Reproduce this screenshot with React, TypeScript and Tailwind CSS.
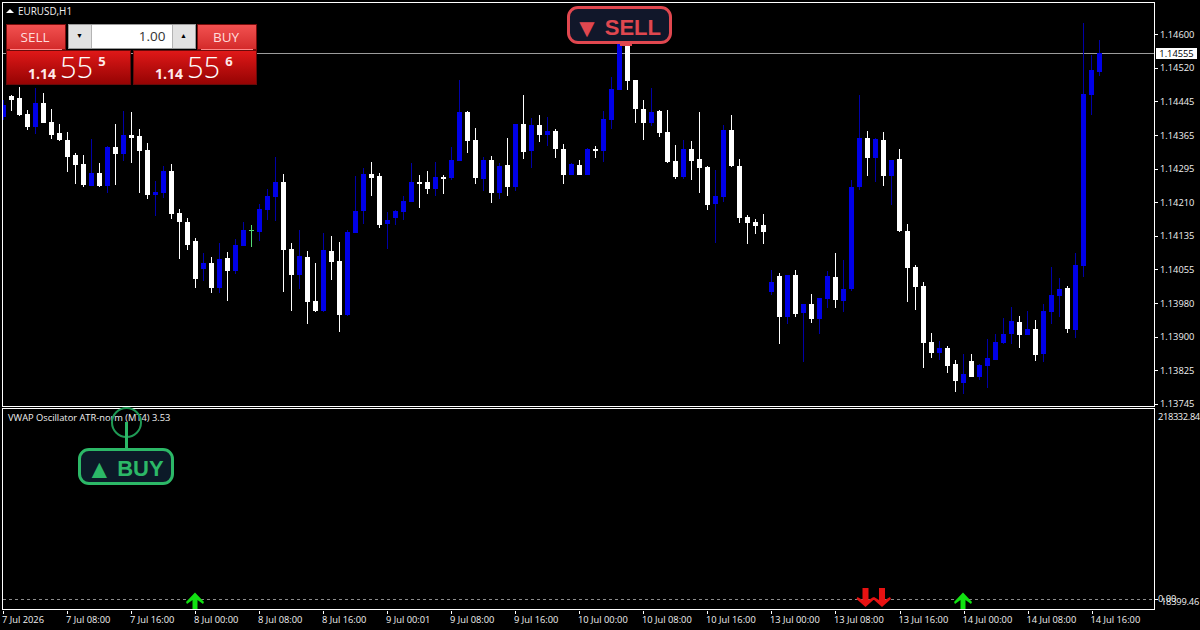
import type { ReactNode } from 'react';

type Candle = [number, number, number, number, 'w' | 'b' | 'g'];

// wick top, body top, body bottom, wick bottom, colour. One candle every 8px starting at x=3.
const CANDLES: Candle[] = [
  [100, 105, 117, 120, 'b'], [95, 96, 100, 111, 'w'], [87, 98, 115, 116, 'w'], [110, 114, 127, 130, 'w'],
  [88, 103, 127, 134, 'b'], [93, 103, 123, 123, 'w'], [109, 122, 135, 139, 'w'], [124, 133, 140, 141, 'w'],
  [132, 140, 157, 172, 'w'], [153, 155, 165, 184, 'w'], [155, 164, 185, 187, 'w'], [139, 173, 186, 186, 'b'],
  [163, 173, 186, 187, 'w'], [146, 147, 186, 193, 'b'], [124, 147, 154, 185, 'w'], [111, 135, 154, 161, 'b'],
  [112, 135, 138, 163, 'w'], [129, 136, 151, 193, 'w'], [143, 150, 195, 199, 'w'], [181, 192, 195, 216, 'b'],
  [166, 171, 193, 198, 'b'], [164, 171, 214, 219, 'w'], [209, 213, 222, 259, 'w'], [218, 222, 245, 250, 'w'],
  [238, 241, 279, 288, 'w'], [253, 263, 269, 281, 'b'], [257, 263, 288, 293, 'w'], [243, 259, 288, 293, 'b'],
  [252, 258, 271, 301, 'w'], [239, 245, 271, 274, 'b'], [222, 230, 246, 246, 'b'], [225, 230, 231, 247, 'g'],
  [204, 209, 232, 241, 'b'], [189, 196, 210, 220, 'b'], [157, 182, 197, 221, 'b'], [174, 182, 250, 292, 'w'],
  [243, 249, 275, 311, 'w'], [230, 256, 275, 289, 'b'], [251, 257, 302, 324, 'w'], [263, 301, 311, 312, 'w'],
  [233, 250, 311, 312, 'b'], [236, 251, 262, 280, 'w'], [242, 261, 315, 332, 'w'], [230, 232, 315, 316, 'b'],
  [176, 211, 233, 233, 'b'], [168, 174, 211, 224, 'b'], [162, 174, 178, 196, 'w'], [173, 176, 225, 228, 'w'],
  [212, 220, 224, 249, 'b'], [210, 211, 218, 225, 'b'], [196, 201, 212, 220, 'b'], [163, 182, 202, 202, 'b'],
  [175, 182, 184, 208, 'w'], [171, 182, 189, 194, 'w'], [162, 177, 189, 196, 'b'], [175, 177, 179, 194, 'w'],
  [147, 160, 178, 180, 'b'], [80, 112, 161, 161, 'b'], [111, 112, 141, 153, 'w'], [128, 140, 178, 184, 'w'],
  [157, 160, 179, 191, 'b'], [156, 160, 193, 203, 'w'], [163, 166, 193, 199, 'b'], [138, 165, 187, 196, 'w'],
  [124, 124, 187, 191, 'b'], [95, 124, 152, 159, 'w'], [118, 125, 151, 168, 'b'], [115, 125, 135, 142, 'w'],
  [117, 131, 135, 146, 'b'], [129, 131, 149, 158, 'w'], [144, 149, 175, 184, 'w'], [163, 164, 175, 175, 'b'],
  [160, 165, 175, 175, 'w'], [148, 149, 175, 175, 'b'], [146, 149, 151, 158, 'w'], [111, 119, 151, 162, 'b'],
  [77, 89, 120, 129, 'b'], [43, 43, 90, 90, 'b'], [36, 43, 81, 90, 'w'], [80, 80, 109, 123, 'w'],
  [100, 109, 123, 140, 'w'], [88, 112, 123, 126, 'b'], [110, 111, 133, 137, 'w'], [110, 132, 162, 163, 'w'],
  [145, 161, 177, 179, 'w'], [140, 149, 177, 179, 'b'], [141, 149, 161, 180, 'w'], [112, 159, 168, 193, 'w'],
  [166, 167, 205, 210, 'w'], [170, 196, 204, 243, 'b'], [125, 130, 197, 202, 'b'], [115, 130, 166, 167, 'w'],
  [159, 166, 218, 223, 'w'], [215, 217, 223, 244, 'w'], [219, 222, 226, 234, 'w'], [214, 225, 232, 244, 'w'],
  [270, 282, 292, 295, 'b'], [273, 276, 317, 344, 'w'], [275, 275, 317, 324, 'b'], [270, 275, 314, 317, 'w'],
  [304, 304, 313, 362, 'b'], [294, 304, 319, 323, 'w'], [298, 298, 319, 334, 'b'], [271, 276, 299, 308, 'b'],
  [253, 277, 300, 308, 'w'], [260, 289, 301, 312, 'b'], [180, 187, 289, 291, 'b'], [95, 138, 187, 190, 'b'],
  [131, 138, 158, 176, 'w'], [138, 139, 158, 182, 'b'], [132, 140, 176, 186, 'w'], [160, 160, 176, 205, 'b'],
  [149, 159, 231, 232, 'w'], [224, 231, 268, 302, 'w'], [265, 267, 287, 310, 'w'], [282, 286, 343, 368, 'w'],
  [333, 342, 353, 358, 'w'], [341, 348, 353, 360, 'b'], [346, 348, 366, 373, 'w'], [360, 364, 381, 392, 'w'],
  [354, 374, 383, 394, 'b'], [354, 361, 377, 377, 'w'], [364, 365, 377, 380, 'b'], [339, 358, 366, 388, 'b'],
  [334, 342, 360, 360, 'b'], [318, 334, 343, 344, 'b'], [307, 321, 334, 344, 'b'], [316, 322, 335, 348, 'w'],
  [311, 329, 335, 335, 'b'], [320, 329, 355, 361, 'w'], [304, 311, 354, 362, 'b'], [267, 295, 312, 324, 'b'],
  [278, 289, 296, 317, 'b'], [286, 288, 329, 333, 'w'], [253, 265, 330, 338, 'b'], [23, 94, 266, 277, 'b'],
  [55, 70, 95, 115, 'b'], [40, 53, 72, 76, 'b'],
];

const PRICE_LABELS = [
  '1.14600', '1.14520', '1.14445', '1.14365', '1.14295', '1.14210',
  '1.14135', '1.14055', '1.13980', '1.13900', '1.13825', '1.13745',
];

const TIME_LABELS = [
  '7 Jul 2026', '7 Jul 08:00', '7 Jul 16:00', '8 Jul 00:00', '8 Jul 08:00', '8 Jul 16:00',
  '9 Jul 00:01', '9 Jul 08:00', '9 Jul 16:00', '10 Jul 00:00', '10 Jul 08:00', '10 Jul 16:00',
  '13 Jul 00:00', '13 Jul 08:00', '13 Jul 16:00', '14 Jul 00:00', '14 Jul 08:00', '14 Jul 16:00',
];

const BODY_COLOR = { w: '#ffffff', b: '#0000e8', g: '#55dd77' };
const WICK_COLOR = { w: '#ffffff', b: '#0000a8', g: '#55dd77' };

function CandleChart() {
  return (
    <svg className="block h-[403px] w-[1151px]" viewBox="3 3 1151 403">
      <rect x={3} y={53} width={1151} height={1} fill="#9c9c9c" />
      {CANDLES.map(([wt, bt, bb, wb, c], i) => {
        const x = 3 + i * 8;
        return (
          <g key={i}>
            <rect x={x} y={wt} width={1} height={wb - wt} fill={WICK_COLOR[c]} />
            <rect x={x - 2} y={bt} width={5} height={Math.max(bb - bt, 1)} fill={BODY_COLOR[c]} />
          </g>
        );
      })}
    </svg>
  );
}

function PriceAxis() {
  return (
    <div className="relative flex h-[405px] w-[45px] flex-col pt-[16px]">
      {PRICE_LABELS.map((label) => (
        <div key={label} className="flex h-[33.6px] shrink-0 items-center gap-[2px]">
          <span className="h-px w-[3px] bg-white" />
          <span>{label}</span>
        </div>
      ))}
      <div className="absolute left-px top-[46px] flex h-[11px] w-[41px] items-center justify-center bg-white text-black">
        1.14555
      </div>
    </div>
  );
}

function UpArrow({ x }: { x: number }) {
  return (
    <path
      d={`M${x} 592.5 L${x + 9} 602 L${x + 8} 604 L${x + 2.5} 600 V609 H${x - 2.5} V600 L${x - 8} 604 L${x - 9} 602 Z`}
      fill="#12e012"
    />
  );
}

function DownArrow({ x }: { x: number }) {
  return (
    <path
      d={`M${x} 607 L${x + 9} 599 L${x + 8} 597 L${x + 3} 600 V588 H${x - 3} V600 L${x - 8} 597 L${x - 9} 599 Z`}
      fill="#e81212"
    />
  );
}

function OscillatorPanel() {
  return (
    <div className="relative h-[202px] w-[1153px] shrink-0 border border-white">
      <div className="pl-[5px] pt-[2px] leading-[14px]">VWAP Oscillator ATR-norm (MT4) 3.53</div>
      <svg className="absolute left-0 top-0 h-[200px] w-[1151px]" viewBox="3 409 1151 200">
        <line x1={3} x2={1154} y1={599.5} y2={599.5} stroke="#8c8c8c" strokeDasharray="3 3" />
        <UpArrow x={195} />
        <DownArrow x={865.5} />
        <DownArrow x={882} />
        <UpArrow x={963} />
      </svg>
    </div>
  );
}

function TimeAxis() {
  return (
    <div className="flex w-[1153px]">
      {TIME_LABELS.map((label, i) => (
        <div key={label} className={i === 13 ? 'w-[64.5px] shrink-0' : 'w-[64px] shrink-0'}>
          <div className="ml-px h-[3px] w-px bg-white" />
          <div className="whitespace-nowrap leading-[12px]">{label}</div>
        </div>
      ))}
    </div>
  );
}

function PriceTile({ sup, className }: { sup: string; className: string }) {
  return (
    <div
      className={`flex h-[35px] items-start border border-[#6a0a0a] bg-gradient-to-b from-[#e01818] to-[#960404] pl-[21px] text-[#ffe9e9] ${className}`}
    >
      <span className="mt-[13px] text-[14px] font-bold leading-[20px]">1.14</span>
      <span className="ml-[4px] mt-[-3px] text-[29px] font-light leading-[38px] text-white">55</span>
      <span className="ml-[5px] mt-[2px] text-[13px] font-bold leading-[16px]">{sup}</span>
    </div>
  );
}

function SideButton({ children }: { children: ReactNode }) {
  return (
    <div className="flex h-[26px] w-[60px] flex-col items-center border border-[#7a0c0c] bg-gradient-to-b from-[#f25050] to-[#d42a2a] text-[13.5px] leading-[24px] text-[#ffdcdc]">
      <span className="mr-[2px] flex-1">{children}</span>
      <span className="mb-[-1px] h-px w-[52px] bg-[#ff8a8a]" />
    </div>
  );
}

function TradePanel() {
  return (
    <div className="absolute left-[6px] top-[24px] flex w-[251px] flex-col" style={{ fontFamily: '"Open Sans", sans-serif' }}>
      <div className="flex justify-between">
        <SideButton>SELL</SideButton>
        <div className="flex h-[25px] w-[128px] border border-[#9a9a9a] bg-white text-[13.5px] text-[#333]">
          <div className="flex w-[23px] items-center justify-center border-r border-[#b4b4b4] bg-[#e2e2e2] text-[7px] text-black">▼</div>
          <div className="flex-1 pr-[6px] text-right leading-[23px]">1.00</div>
          <div className="flex w-[23px] items-center justify-center border-l border-[#b4b4b4] bg-[#e2e2e2] text-[7px] text-black">▲</div>
        </div>
        <SideButton>BUY</SideButton>
      </div>
      <div className="flex gap-[2px]">
        <PriceTile sup="5" className="w-[125px]" />
        <PriceTile sup="6" className="w-[124px]" />
      </div>
    </div>
  );
}

export default function App() {
  return (
    <div
      className="relative h-[630px] w-[1200px] overflow-hidden bg-black pl-[2px] pt-[2px] text-[9.3px] text-[#f0f0f0]"
      style={{ fontFamily: '"Open Sans", sans-serif' }}
    >
      <div className="flex flex-col gap-px">
        <div className="flex">
          <div className="relative h-[405px] w-[1153px] shrink-0 border border-white">
            <CandleChart />
            <div className="absolute left-[15px] top-[1px] text-[9.9px] leading-[14px]">EURUSD,H1</div>
            <div className="absolute left-[3px] top-[6px] h-0 w-0 border-x-[4px] border-b-[4px] border-x-transparent border-b-white" />
          </div>
          <PriceAxis />
        </div>
        <div className="flex">
          <OscillatorPanel />
          <div className="whitespace-nowrap pl-[3px] pt-[2px] leading-[14px] tracking-[-0.35px]">218332.84</div>
        </div>
        <TimeAxis />
      </div>

      <div className="absolute left-[1155px] top-[599px] h-px w-[3px] bg-white" />
      <div className="absolute left-[1158px] top-[592px] leading-[14px]">0.00</div>
      <div className="absolute left-[1161px] top-[595px] leading-[14px] tracking-[-0.2px]">18399.46</div>

      <TradePanel />

      {/* sell badge */}
      <div className="absolute left-[567px] top-[6px] flex h-[38px] w-[105px] items-center justify-center gap-[5px] rounded-[11px] border-[3px] border-[#e0474f] bg-[#11172a] pr-[4px] pt-[5px] text-[22px] font-bold text-[#e0474f]" style={{ fontFamily: '"Liberation Sans", sans-serif' }}>
        <span className="text-[26px] leading-[26px]">▼</span>
        <span className="leading-[26px]">SELL</span>
      </div>
      <div className="absolute left-[620px] top-[44px] h-[2px] w-[12px] bg-[#e0474f]" />

      {/* buy badge with its pointer */}
      <div className="absolute left-[111px] top-[407px] h-[31px] w-[31px] rounded-full border-2 border-[#1f9a55]" />
      <div className="absolute left-[125px] top-[422px] h-[27px] w-[3px] bg-[#2cb867]" />
      <div className="absolute left-[78px] top-[448px] flex h-[37px] w-[96px] items-center justify-center gap-[5px] rounded-[11px] border-[3px] border-[#2cb867] bg-[#0c1a28] pr-[2px] pt-[5px] text-[22px] font-bold text-[#2cb867]" style={{ fontFamily: '"Liberation Sans", sans-serif' }}>
        <span className="text-[26px] leading-[26px]">▲</span>
        <span className="leading-[26px]">BUY</span>
      </div>
    </div>
  );
}
